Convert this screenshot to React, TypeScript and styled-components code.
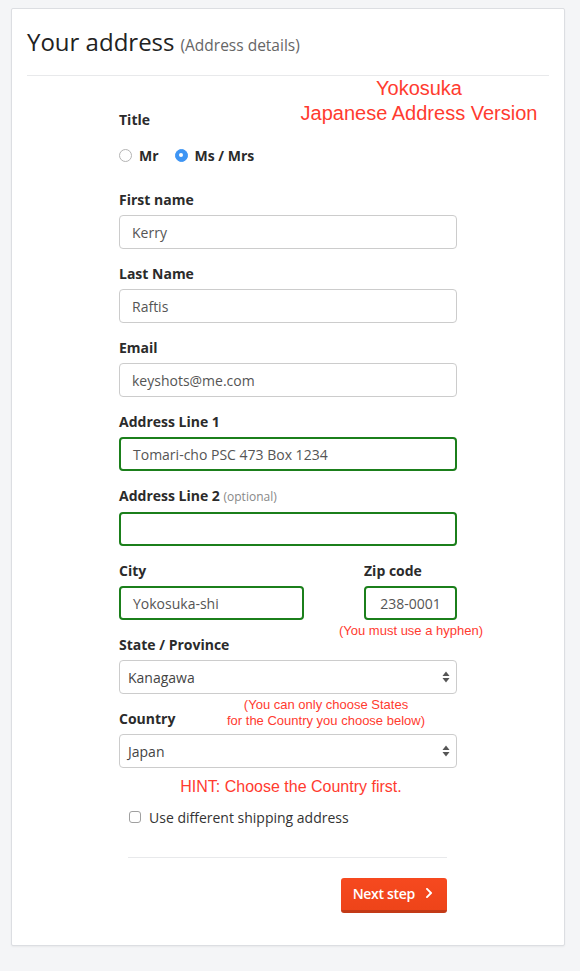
import styled, { createGlobalStyle } from 'styled-components';
import { FaChevronRight } from 'react-icons/fa';

const GlobalStyle = createGlobalStyle`
  html, body {
    margin: 0;
    padding: 0;
    background: #f4f5f7;
    font-family: 'Open Sans', 'Noto Sans', sans-serif;
    color: #333;
  }
  * {
    box-sizing: border-box;
  }
`;

const Page = styled.div`
  padding: 8px 15px 26px 11px;
`;

const Card = styled.div`
  background: #fff;
  border: 1px solid #dcdee2;
  border-radius: 2px;
  box-shadow: 0 1px 2px rgba(0, 0, 0, 0.05);
  padding: 0 15px 32px;
`;

const Header = styled.div`
  display: flex;
  align-items: baseline;
  gap: 6px;
  padding: 18px 0 19px;
  border-bottom: 1px solid #e8e9eb;
`;

const Heading = styled.h2`
  margin: 0;
  font-size: 24px;
  line-height: 29px;
  font-weight: 400;
  color: #222;
`;

const SubHeading = styled.span`
  font-size: 15.5px;
  color: #666;
`;

const Form = styled.div`
  position: relative;
  width: 338px;
  margin: 0 auto;
  padding-top: 34px;
`;

const Label = styled.div`
  font-size: 14px;
  line-height: 20px;
  font-weight: 700;
  color: #2b2b2b;
  margin-bottom: 5px;
`;

const Optional = styled.span`
  font-size: 12px;
  font-weight: 400;
  color: #888;
`;

const Field = styled.div<{ $width?: number }>`
  width: ${({ $width }) => ($width ? `${$width}px` : '100%')};
  margin-bottom: 15px;
`;

const TitleGroup = styled.div`
  margin-bottom: 25px;
`;

const RadioRow = styled.div`
  display: flex;
  gap: 16px;
  margin-top: 15px;
  height: 20px;
  align-items: center;
`;

const RadioOption = styled.label`
  display: flex;
  align-items: center;
  gap: 7px;
  font-size: 14px;
  font-weight: 700;
  color: #2b2b2b;
`;

const RadioDot = styled.span<{ $checked?: boolean }>`
  width: 13px;
  height: 13px;
  border-radius: 50%;
  display: inline-flex;
  align-items: center;
  justify-content: center;
  border: 1px solid ${({ $checked }) => ($checked ? '#3e95f4' : '#b4b4b4')};
  background: ${({ $checked }) => ($checked ? '#3e95f4' : '#fff')};

  &::after {
    content: '';
    width: 4px;
    height: 4px;
    border-radius: 50%;
    background: ${({ $checked }) => ($checked ? '#fff' : 'transparent')};
  }
`;

const Input = styled.div<{ $valid?: boolean; $align?: string }>`
  height: 34px;
  border: ${({ $valid }) => ($valid ? '2px solid #1b7f1b' : '1px solid #ccc')};
  border-radius: 4px;
  padding: 0 12px;
  display: flex;
  align-items: center;
  justify-content: ${({ $align }) => $align || 'flex-start'};
  font-size: 14px;
  color: #555;
  background: #fff;
`;

const Select = styled.div`
  position: relative;
  height: 34px;
  border: 1px solid #ccc;
  border-radius: 4px;
  padding: 0 8px;
  display: flex;
  align-items: center;
  font-size: 14px;
  color: #444;
  background: #fff;
`;

const SelectArrows = styled.svg`
  position: absolute;
  right: 6px;
  top: 50%;
  transform: translateY(-50%);
`;

const Row = styled.div`
  display: flex;
  justify-content: space-between;
`;

const CheckRow = styled.label`
  display: flex;
  align-items: center;
  gap: 8px;
  height: 20px;
  margin: 39px 0 0 10px;
  font-size: 14px;
  color: #333;
`;

const CheckBox = styled.span`
  width: 12px;
  height: 12px;
  border: 1px solid #a0a0a0;
  border-radius: 3px;
  background: #fff;
`;

const Footer = styled.div`
  margin: 30px 10px 0 9px;
  padding-top: 20px;
  border-top: 1px solid #e8e9eb;
  display: flex;
  justify-content: flex-end;
`;

const NextButton = styled.button`
  display: flex;
  align-items: center;
  gap: 8px;
  height: 35px;
  padding: 0 12px 2px 12px;
  border: none;
  border-bottom: 3px solid #c33a17;
  border-radius: 3px;
  background: linear-gradient(#f6491f, #ee4419);
  color: #fff;
  font-family: 'Open Sans', sans-serif;
  font-size: 14px;
  font-weight: 600;
  letter-spacing: -0.3px;
  cursor: pointer;
`;

const Note = styled.div<{ $top: number; $left: number; $width: number; $size: number; $line: number }>`
  position: absolute;
  top: ${({ $top }) => $top}px;
  left: ${({ $left }) => $left}px;
  width: ${({ $width }) => $width}px;
  font-family: 'Liberation Sans', Arial, sans-serif;
  font-size: ${({ $size }) => $size}px;
  line-height: ${({ $line }) => $line}px;
  color: #ff3b2f;
  text-align: center;
  white-space: nowrap;
`;

const Arrows = () => (
  <SelectArrows width="8" height="12" viewBox="0 0 8 12">
    <path d="M4 0.5 L7.5 5 L0.5 5 Z" fill="#555" />
    <path d="M4 11.5 L7.5 7 L0.5 7 Z" fill="#555" />
  </SelectArrows>
);

export default function App() {
  return (
    <Page>
      <GlobalStyle />
      <Card>
        <Header>
          <Heading>Your address</Heading>
          <SubHeading>(Address details)</SubHeading>
        </Header>
        <Form>
          <Note $top={0} $left={170} $width={260} $size={20} $line={25}>
            Yokosuka
            <br />
            Japanese Address Version
          </Note>

          <TitleGroup>
            <Label>Title</Label>
            <RadioRow>
              <RadioOption>
                <RadioDot />
                Mr
              </RadioOption>
              <RadioOption>
                <RadioDot $checked />
                Ms / Mrs
              </RadioOption>
            </RadioRow>
          </TitleGroup>

          <Field>
            <Label>First name</Label>
            <Input>Kerry</Input>
          </Field>
          <Field>
            <Label>Last Name</Label>
            <Input>Raftis</Input>
          </Field>
          <Field>
            <Label>Email</Label>
            <Input>keyshots@me.com</Input>
          </Field>
          <Field>
            <Label>Address Line 1</Label>
            <Input $valid>Tomari-cho PSC 473 Box 1234</Input>
          </Field>
          <Field>
            <Label>
              Address Line 2 <Optional>(optional)</Optional>
            </Label>
            <Input $valid />
          </Field>
          <Row>
            <Field $width={185}>
              <Label>City</Label>
              <Input $valid>Yokosuka-shi</Input>
            </Field>
            <Field $width={93}>
              <Label>Zip code</Label>
              <Input $valid $align="center">238-0001</Input>
            </Field>
          </Row>
          <Note $top={547} $left={219} $width={146} $size={13} $line={16}>
            (You must use a hyphen)
          </Note>

          <Field>
            <Label>State / Province</Label>
            <Select>
              Kanagawa
              <Arrows />
            </Select>
          </Field>
          <Note $top={621} $left={100} $width={214} $size={13} $line={16}>
            (You can only choose States
            <br />
            for the Country you choose below)
          </Note>

          <Field>
            <Label>Country</Label>
            <Select>
              Japan
              <Arrows />
            </Select>
          </Field>
          <Note $top={701} $left={22} $width={300} $size={16} $line={20}>
            HINT: Choose the Country first.
          </Note>

          <CheckRow>
            <CheckBox />
            Use different shipping address
          </CheckRow>

          <Footer>
            <NextButton>
              Next step
              <FaChevronRight size={12} />
            </NextButton>
          </Footer>
        </Form>
      </Card>
    </Page>
  );
}
